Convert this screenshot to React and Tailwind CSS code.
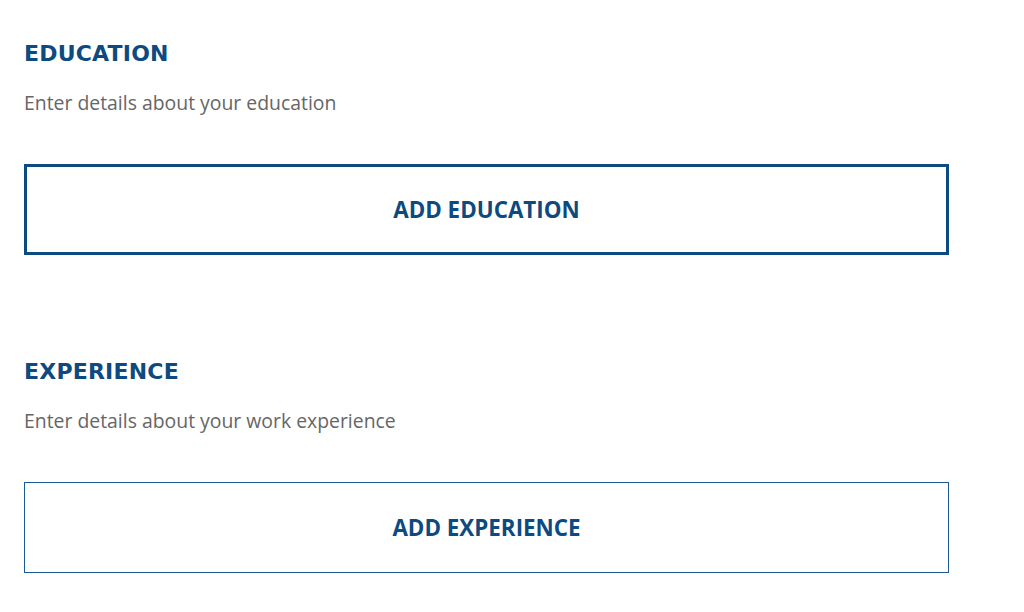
import React from 'react';

function Section({ title, text, button, thick }) {
  return (
    <section className="mb-[103px]">
      <h2 className="text-[22px] font-bold leading-[28px] tracking-[0.2px] text-[#0d4a80] font-['DejaVu_Sans',sans-serif]">
        {title}
      </h2>
      <p className="mt-[22px] text-[19.4px] leading-[26px] text-[#666666] font-['Open_Sans',sans-serif]">
        {text}
      </p>
      <button
        className={`mt-[48px] flex h-[91px] w-[925px] items-center justify-center bg-white text-[22.4px] font-bold text-[#0d4a80] font-['Open_Sans',sans-serif] ${
          thick ? 'border-[3px] border-[#0d4a80]' : 'border border-[#1a5a94]'
        }`}
      >
        {button}
      </button>
    </section>
  );
}

export default function App() {
  return (
    <div className="min-h-screen bg-white px-6 pt-[40px]">
      <Section
        title="EDUCATION"
        text="Enter details about your education"
        button="ADD EDUCATION"
        thick
      />
      <Section
        title="EXPERIENCE"
        text="Enter details about your work experience"
        button="ADD EXPERIENCE"
      />
    </div>
  );
}
